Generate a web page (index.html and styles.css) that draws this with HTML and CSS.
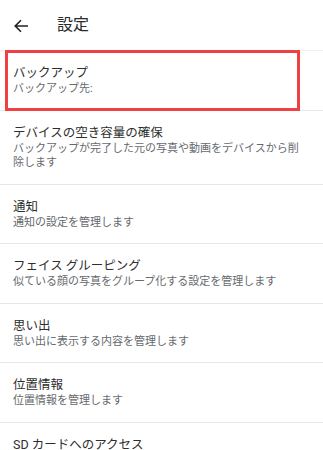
FILE: index.html
```html
<!DOCTYPE html>
<html lang="ja">
<head>
<meta charset="utf-8">
<link rel="stylesheet" href="styles.css">
</head>
<body>
<header class="topbar">
  <svg class="back" width="16" height="16" viewBox="0 0 16 16"><path d="M15 8H2.5M8 2.2L2.2 8L8 13.8" fill="none" stroke="#222" stroke-width="1.6"/></svg>
  <h1 class="title">設定</h1>
</header>
<ul class="list">
  <li class="item highlighted">
    <div class="item-title">バックアップ</div>
    <div class="item-sub">バックアップ先:</div>
    <span class="mark"></span>
  </li>
  <li class="item">
    <div class="item-title">デバイスの空き容量の確保</div>
    <div class="item-sub">バックアップが完了した元の写真や動画をデバイスから削除します</div>
  </li>
  <li class="item">
    <div class="item-title">通知</div>
    <div class="item-sub">通知の設定を管理します</div>
  </li>
  <li class="item">
    <div class="item-title">フェイス グルーピング</div>
    <div class="item-sub">似ている顔の写真をグループ化する設定を管理します</div>
  </li>
  <li class="item">
    <div class="item-title">思い出</div>
    <div class="item-sub">思い出に表示する内容を管理します</div>
  </li>
  <li class="item">
    <div class="item-title">位置情報</div>
    <div class="item-sub">位置情報を管理します</div>
  </li>
  <li class="item">
    <div class="item-title">SD カードへのアクセス</div>
  </li>
</ul>
</body>
</html>
```
FILE: styles.css
```css
html, body {
  margin: 0;
  padding: 0;
  background: #ffffff;
  font-family: Roboto, "Noto Sans CJK JP", sans-serif;
  overflow: hidden;
}
.topbar {
  height: 51px;
  display: flex;
  align-items: center;
  padding-left: 13px;
  border-bottom: 1px solid #f1f1f3;
  box-sizing: border-box;
}
.back {
  display: block;
  margin-top: 1px;
}
.title {
  margin: 0 0 0 28px;
  font-size: 16px;
  font-weight: 400;
  color: #2a2a2a;
  line-height: 20px;
}
.list {
  list-style: none;
  margin: 0;
  padding: 0;
}
.item {
  position: relative;
  padding: 13px 16px 13px 13px;
  border-bottom: 1px solid #e6e6ee;
}
.item-title {
  font-size: 12.5px;
  line-height: 18px;
  color: #2e2e2e;
}
.item-sub {
  font-size: 11px;
  line-height: 14.5px;
  color: #666a6e;
}
.mark {
  position: absolute;
  left: 5px;
  top: -1px;
  width: 295px;
  bottom: -1px;
  border: 3px solid #ef4044;
  box-sizing: border-box;
  pointer-events: none;
}
```
